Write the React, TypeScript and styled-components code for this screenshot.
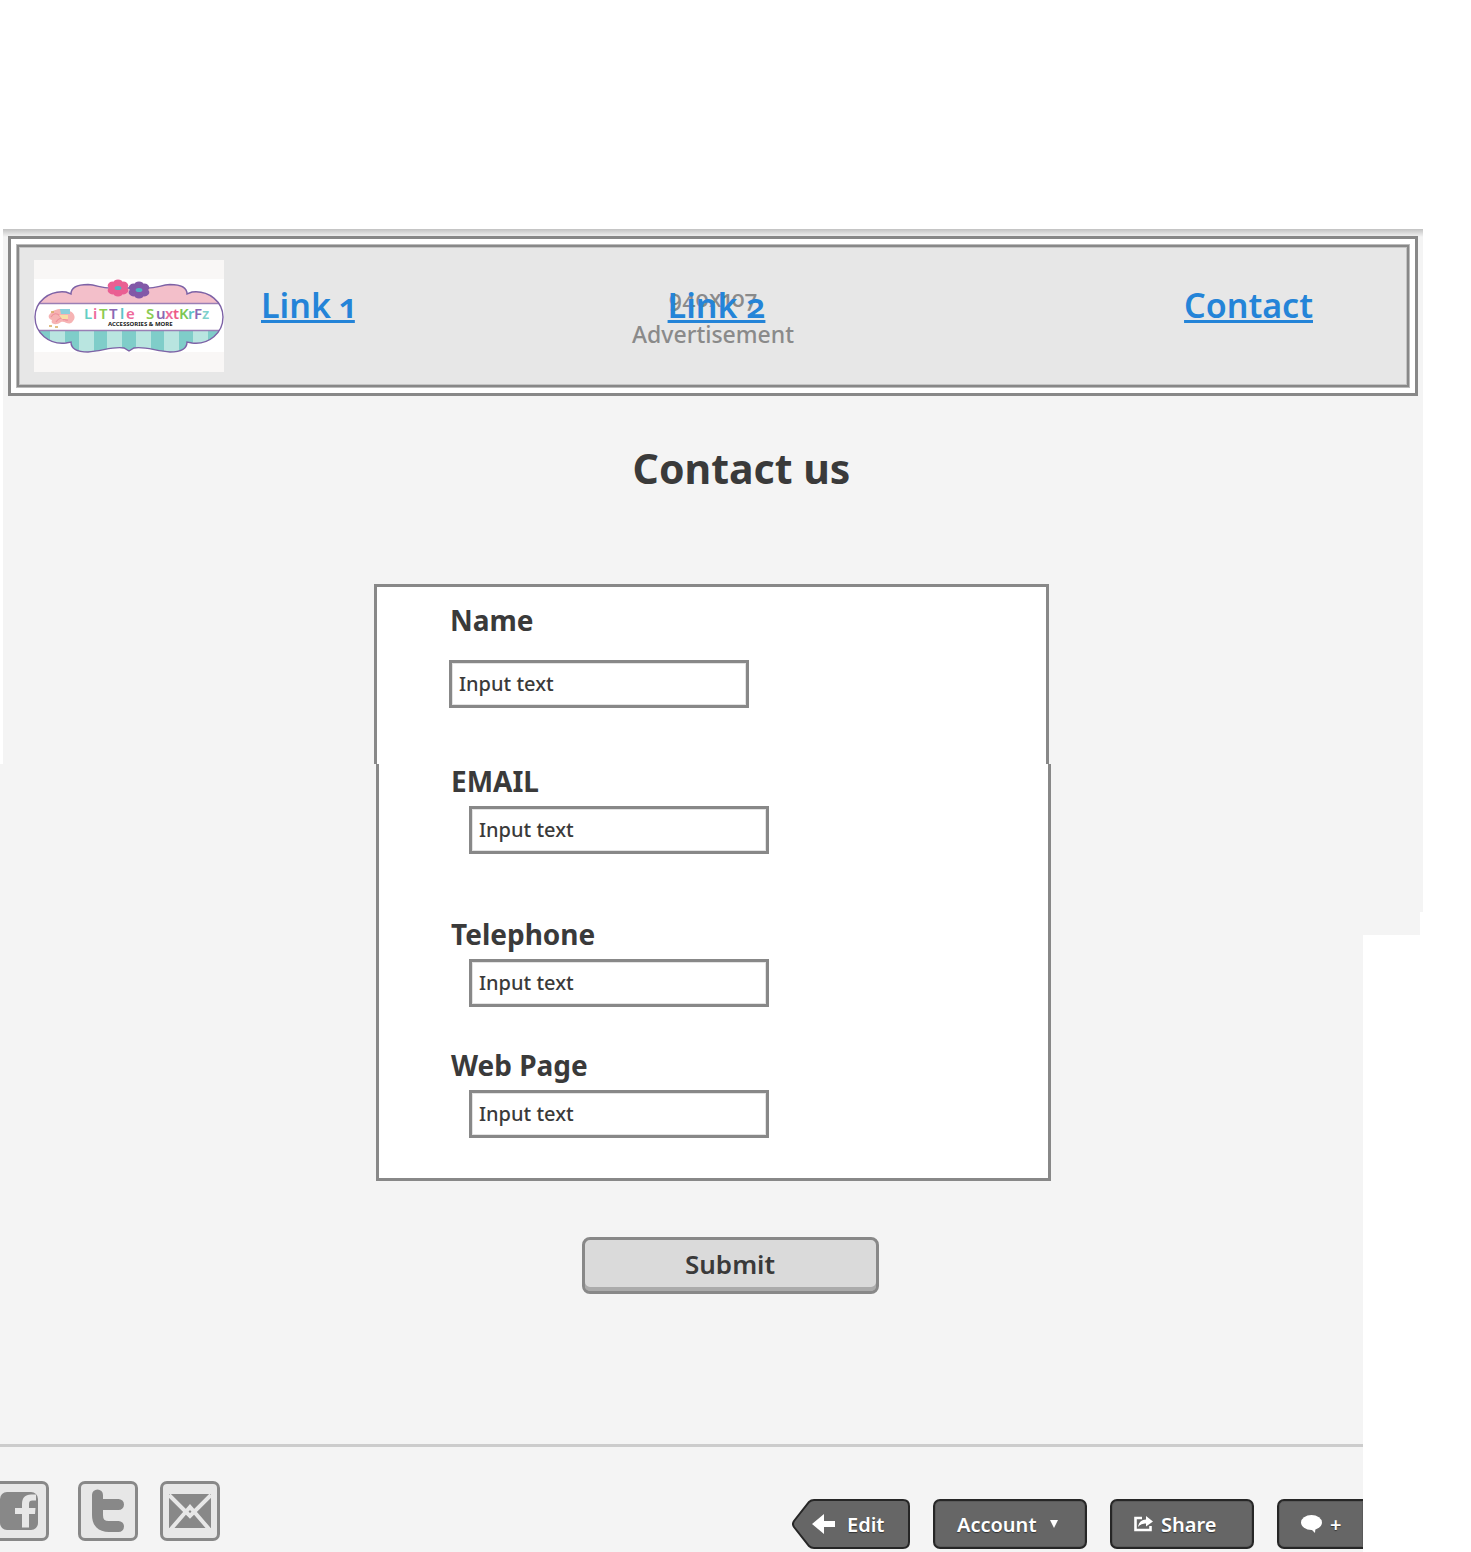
import React from "react";
import styled, { createGlobalStyle } from "styled-components";

const GlobalStyle = createGlobalStyle`
  *, *::before, *::after { box-sizing: border-box; }
  body {
    margin: 0;
    background: #fff;
    color: #3a3a3a;
    font-family: "Noto Sans", "Open Sans", sans-serif;
    font-variant-numeric: oldstyle-nums proportional-nums;
  }
  button, input { font: inherit; color: inherit; }
`;

const Page = styled.div`
  padding-top: 229px;
  overflow: hidden;
`;

const UpperArea = styled.div`
  margin: 0 48px 0 3px;
  background: linear-gradient(#c2c2c2, #dcdcdc 4px, #f4f4f4 8px, #f4f4f4);
  padding-top: 7px;
`;

const LowerArea = styled.div`
  background:
    linear-gradient(#f4f4f4, #f4f4f4) 0 0 / calc(100% - 48px) 148px no-repeat,
    linear-gradient(#f4f4f4, #f4f4f4) 0 0 / calc(100% - 51px) 171px no-repeat,
    linear-gradient(#f4f4f4, #f4f4f4) 0 0 / calc(100% - 108px) 100% no-repeat;
`;

const Header = styled.header`
  margin: 0 5px;
  padding: 5px;
  border: 3px solid #888;
  background: #fff;
`;

const Banner = styled.div`
  display: grid;
  border: 1px solid #bbb;
  background: #e7e7e7;
  box-shadow: inset 0 0 0 2px #888, inset 0 0 0 3px #c4c4c4;
`;

const AdLabel = styled.p`
  grid-area: 1 / 1;
  align-self: center;
  margin: 0;
  text-align: center;
  font-size: 23px;
  font-weight: 500;
  line-height: 36px;
  color: #8a8a8a;
`;

const BannerRow = styled.div`
  grid-area: 1 / 1;
  z-index: 1;
  display: flex;
  align-items: center;
  padding: 15px 96px 15px 17px;
`;

const Nav = styled.nav`
  flex: 1;
  display: grid;
  grid-template-columns: 407fr 517fr auto;
  padding: 0 0 22px 37px;
`;

const NavLink = styled.a`
  justify-self: start;
  font-size: 34px;
  font-weight: 600;
  line-height: 48px;
  color: #2484d8;
  text-decoration: underline;
  text-decoration-thickness: 3px;
  text-underline-offset: 2px;
  text-decoration-skip-ink: none;
`;

const Title = styled.h1`
  margin: 44px 0 88px;
  padding-left: 57px;
  text-align: center;
  font-size: 41px;
  font-weight: 700;
  line-height: 56px;
`;

const PanelTop = styled.div`
  width: 675px;
  max-width: 100%;
  margin: 0 auto;
  padding: 17px 20px 56px 72px;
  border: 3px solid #888;
  border-bottom: 0;
  background: #fff;
`;

const PanelSlot = styled.div<{ $end: number }>`
  padding-right: ${(p) => p.$end}px;
`;

const PanelBottom = styled(PanelTop)`
  padding: 1px 20px 40px 71px;
  border: 3px solid #888;
  border-top: 0;
`;

const Field = styled.div<{ $gap: number; $indent?: boolean; $after?: number }>`
  display: flex;
  flex-direction: column;
  gap: ${(p) => p.$gap}px;
  margin-bottom: ${(p) => p.$after ?? 0}px;
  & > input { margin-left: ${(p) => (p.$indent ? 19 : 0)}px; }
`;

const Label = styled.label`
  padding-left: 1px;
  font-size: 28px;
  font-weight: 700;
  line-height: 32px;
`;

const TextInput = styled.input`
  width: 300px;
  height: 48px;
  padding: 0 7px 2px;
  border: 3px solid #888;
  border-radius: 0;
  background: #fff;
  box-shadow: inset 0 0 0 1px #e4e4e4;
  font-size: 20px;
  font-weight: 500;
  outline-offset: 2px;
`;

const SubmitRow = styled.div`
  display: flex;
  justify-content: center;
  padding: 56px 11px 150px 0;
`;

const SubmitButton = styled.button`
  width: 297px;
  height: 57px;
  padding: 0 0 4px;
  border: 3px solid #888;
  border-radius: 8px;
  background: #dadada;
  box-shadow: inset 0 -4px 0 #ababab;
  font-size: 26px;
  font-weight: 600;
  cursor: pointer;
`;

const Footer = styled.footer`
  display: flex;
  justify-content: space-between;
  align-items: flex-start;
  margin-right: 108px;
  border-top: 3px solid #ccc;
  padding-top: 34px;
  overflow: hidden;
`;

const Socials = styled.div`
  display: flex;
  gap: 22px;
  margin-left: -11px;
`;

const SocialLink = styled.a<{ $wide?: boolean }>`
  width: 60px;
  height: 60px;
  margin-right: ${(p) => (p.$wide ? 7 : 0)}px;
  border: 3px solid #888;
  border-radius: 7px;
  background: #e7e7e7;
  & > svg { display: block; width: 54px; height: 54px; }
`;

const Toolbar = styled.div`
  display: flex;
  gap: 23px;
  padding: 18px 0 3px;
`;

const ToolButton = styled.button<{ $width: number; $cut?: boolean }>`
  display: flex;
  align-items: center;
  gap: 8px;
  width: ${(p) => p.$width}px;
  height: 50px;
  padding: 0 0 0 22px;
  border: 2px solid #262626;
  border-right-width: ${(p) => (p.$cut ? 0 : 2)}px;
  border-radius: ${(p) => (p.$cut ? "7px 0 0 7px" : "7px")};
  background: #666;
  box-shadow: inset 0 0 0 1px #5a5a5a;
  color: #fff;
  font-size: 20px;
  font-weight: 600;
  text-shadow: 0 1px 1px #333;
  cursor: pointer;
  & > svg { flex: none; }
`;

const BackButton = styled(ToolButton)`
  position: relative;
  z-index: 0;
  gap: 12px;
  border-color: transparent;
  background: none;
  box-shadow: none;
  padding-left: 18px;
`;

const BackShape = styled.svg`
  position: absolute;
  left: -2px;
  top: -2px;
  z-index: -1;
`;

const petals = [0, 60, 120, 180, 240, 300];

function Flower({ x, y, color }: { x: number; y: number; color: string }) {
  return (
    <g transform={`translate(${x} ${y}) scale(1.3 1)`}>
      {petals.map((a) => (
        <circle key={a} r="3.8" cy="-4.8" fill={color} transform={`rotate(${a})`} />
      ))}
      <circle r="5" fill={color} />
      <ellipse rx="2.6" ry="2" fill="#4fb3c4" />
    </g>
  );
}

const plaque =
  "M1 57C1 42 15 30 32 32L37 34C37 27 44 24.5 54 24.5C64 25 68 29 80 28H110C122 29 126 25 136 24.5C146 24.5 153 27 153 34L158 32C175 30 189 42 189 57C189 73 175 85 158 83L153 82C153 89 146 92 136 92C122 91 110 86 100 88L95 91L90 88C80 86 68 91 54 92C44 92 37 89 37 82L32 83C15 85 1 73 1 57Z";

const word: [string, number, string][] = [
  ["L", 50, "#63cfc4"], ["i", 59, "#ee6a9b"], ["T", 65, "#8ccb52"], ["T", 75, "#8a68b4"],
  ["l", 86, "#5cc3c8"], ["e", 92, "#ee6a9b"], ["S", 112, "#8ccb52"], ["u", 122, "#8a68b4"],
  ["x", 131, "#ee6a9b"], ["t", 139, "#ee5a86"], ["K", 145, "#7cc653"], ["r", 154, "#5cc3c8"],
  ["F", 160, "#8a68b4"], ["z", 168, "#7fd0cc"],
];

function Logo() {
  return (
    <svg width="190" height="112" viewBox="0 0 190 112" role="img" aria-label="Little shop logo">
      <defs>
        <clipPath id="plaque"><path d={plaque} /></clipPath>
      </defs>
      <rect width="190" height="112" fill="#f9f7f6" />
      <rect y="19" width="190" height="73" fill="#fff" />
      <g clipPath="url(#plaque)">
        <rect width="190" height="44" fill="#f3bfca" />
        <rect y="44" width="190" height="27" fill="#fff" />
        <rect y="71" width="190" height="24" fill="#7fcdc9" />
        {[16, 45, 73, 102, 130, 159].map((x) => (
          <rect key={x} x={x} y="71" width="15" height="24" fill="#b9e5e0" />
        ))}
        <path d="M0 43.5H190M0 70.5H190" stroke="#9a7fb5" strokeWidth="1.4" />
      </g>
      <path d={plaque} fill="none" stroke="#7d62a6" strokeWidth="1.4" />
      <Flower x={84} y={28} color="#ea5f93" />
      <Flower x={105} y={30} color="#8259a8" />
      <path d="M16 54C20 48 30 48 33 51C39 50 43 57 39 61C35 67 31 60 27 62C22 66 16 64 18 60C14 59 14 55 16 54Z" fill="#f6b3b3" />
      <path d="M17 57Q21 51 26 56T34 60M22 62Q26 56 30 60" fill="none" stroke="#ee8f9c" strokeWidth="1.2" />
      <path d="M26 49H36V54H27Z" fill="#8ccfdc" />
      <path d="M25 55H34V59H28Z" fill="#f7dfa6" />
      <path d="M15 66H18M21 67H24M17 52H20" stroke="#d7a95c" strokeWidth="1.6" />
      <g fontFamily="Noto Sans, sans-serif" fontSize="15" fontWeight="600">
        {word.map(([c, x, color], i) => (
          <text key={i} x={x} y="59" fill={color}>{c}</text>
        ))}
      </g>
      <text x="74" y="66" fontFamily="Noto Sans, sans-serif" fontSize="6" fontWeight="700" fill="#222">
        ACCESSORIES &amp; MORE
      </text>
    </svg>
  );
}

export default function App() {
  const stop = (e: React.FormEvent) => e.preventDefault();
  return (
    <>
      <GlobalStyle />
      <Page>
        <form onSubmit={stop}>
          <UpperArea>
            <Header>
              <Banner>
                <AdLabel>940x107<br />Advertisement</AdLabel>
                <BannerRow>
                  <Logo />
                  <Nav>
                    <NavLink href="#link-1">Link 1</NavLink>
                    <NavLink href="#link-2">Link 2</NavLink>
                    <NavLink href="#contact">Contact</NavLink>
                  </Nav>
                </BannerRow>
              </Banner>
            </Header>
            <Title>Contact us</Title>
            <PanelSlot $end={3}>
              <PanelTop>
                <Field $gap={24}>
                  <Label htmlFor="name">Name</Label>
                  <TextInput id="name" defaultValue="Input text" />
                </Field>
              </PanelTop>
            </PanelSlot>
          </UpperArea>
          <LowerArea>
            <PanelSlot $end={44}>
              <PanelBottom>
                <Field $gap={9} $indent $after={64}>
                  <Label htmlFor="email">EMAIL</Label>
                  <TextInput id="email" defaultValue="Input text" />
                </Field>
                <Field $gap={9} $indent $after={42}>
                  <Label htmlFor="telephone">Telephone</Label>
                  <TextInput id="telephone" defaultValue="Input text" />
                </Field>
                <Field $gap={9} $indent>
                  <Label htmlFor="webpage">Web Page</Label>
                  <TextInput id="webpage" defaultValue="Input text" />
                </Field>
              </PanelBottom>
            </PanelSlot>
            <SubmitRow>
              <SubmitButton type="submit">Submit</SubmitButton>
            </SubmitRow>
            <Footer>
              <Socials>
                <SocialLink href="#facebook" aria-label="Facebook" $wide>
                  <svg viewBox="0 0 54 54">
                    <rect x="8" y="8" width="38" height="38" rx="7" fill="#888" />
                    <path d="M44 10.5H39C33 10.5 30 14 30 20V24H23V30H30V43.5H37V30H43L43.5 24H37V20C37 17.5 38 16.5 40.5 16.5H44Z" fill="#e7e7e7" />
                  </svg>
                </SocialLink>
                <SocialLink href="#twitter" aria-label="Twitter">
                  <svg viewBox="0 0 54 54">
                    <path d="M16.5 11V31Q16.5 42.5 28 42.5H37.5M16.5 20.5H37.5" fill="none" stroke="#888" strokeWidth="11" strokeLinecap="round" />
                  </svg>
                </SocialLink>
                <SocialLink href="#mail" aria-label="Mail">
                  <svg viewBox="0 0 54 54">
                    <rect x="6" y="10" width="42" height="34" fill="#888" />
                    <path d="M6 11L27 32L48 11M8 45L27 23L46 45" fill="none" stroke="#e7e7e7" strokeWidth="4" />
                  </svg>
                </SocialLink>
              </Socials>
              <Toolbar>
                <BackButton type="button" $width={118}>
                  <BackShape width="118" height="50" viewBox="0 0 118 50">
                    <path d="M22 1H111Q117 1 117 7V43Q117 49 111 49H22Q19 49 17 47L2 28Q0 25 2 22L17 3Q19 1 22 1Z" fill="#666" stroke="#262626" strokeWidth="2" />
                  </BackShape>
                  <svg width="23" height="20" viewBox="0 0 23 20">
                    <path d="M0 10L12 0V7H23V13H12V20Z" fill="#fff" />
                  </svg>
                  Edit
                </BackButton>
                <ToolButton type="button" $width={154}>
                  Account
                  <svg width="18" height="8" viewBox="0 0 18 8">
                    <path d="M5 0H13L9 8Z" fill="#fff" />
                  </svg>
                </ToolButton>
                <ToolButton type="button" $width={144}>
                  <svg width="19" height="16" viewBox="0 0 19 16">
                    <path d="M8 2H1.5V14H16.5V10" fill="none" stroke="#fff" strokeWidth="2.6" />
                    <path d="M12 0L19 5.5L12 10.5V7.5Q7 7 4 11Q5 4 12 3.5Z" fill="#fff" />
                  </svg>
                  Share
                </ToolButton>
                <ToolButton type="button" $width={86} $cut aria-label="Add comment">
                  <svg width="21" height="18" viewBox="0 0 21 18">
                    <ellipse cx="10.5" cy="7.5" rx="10.5" ry="7.5" fill="#fff" />
                    <path d="M9 13L14 18L14.5 12Z" fill="#fff" />
                  </svg>
                  <span>+</span>
                </ToolButton>
              </Toolbar>
            </Footer>
          </LowerArea>
        </form>
      </Page>
    </>
  );
}
